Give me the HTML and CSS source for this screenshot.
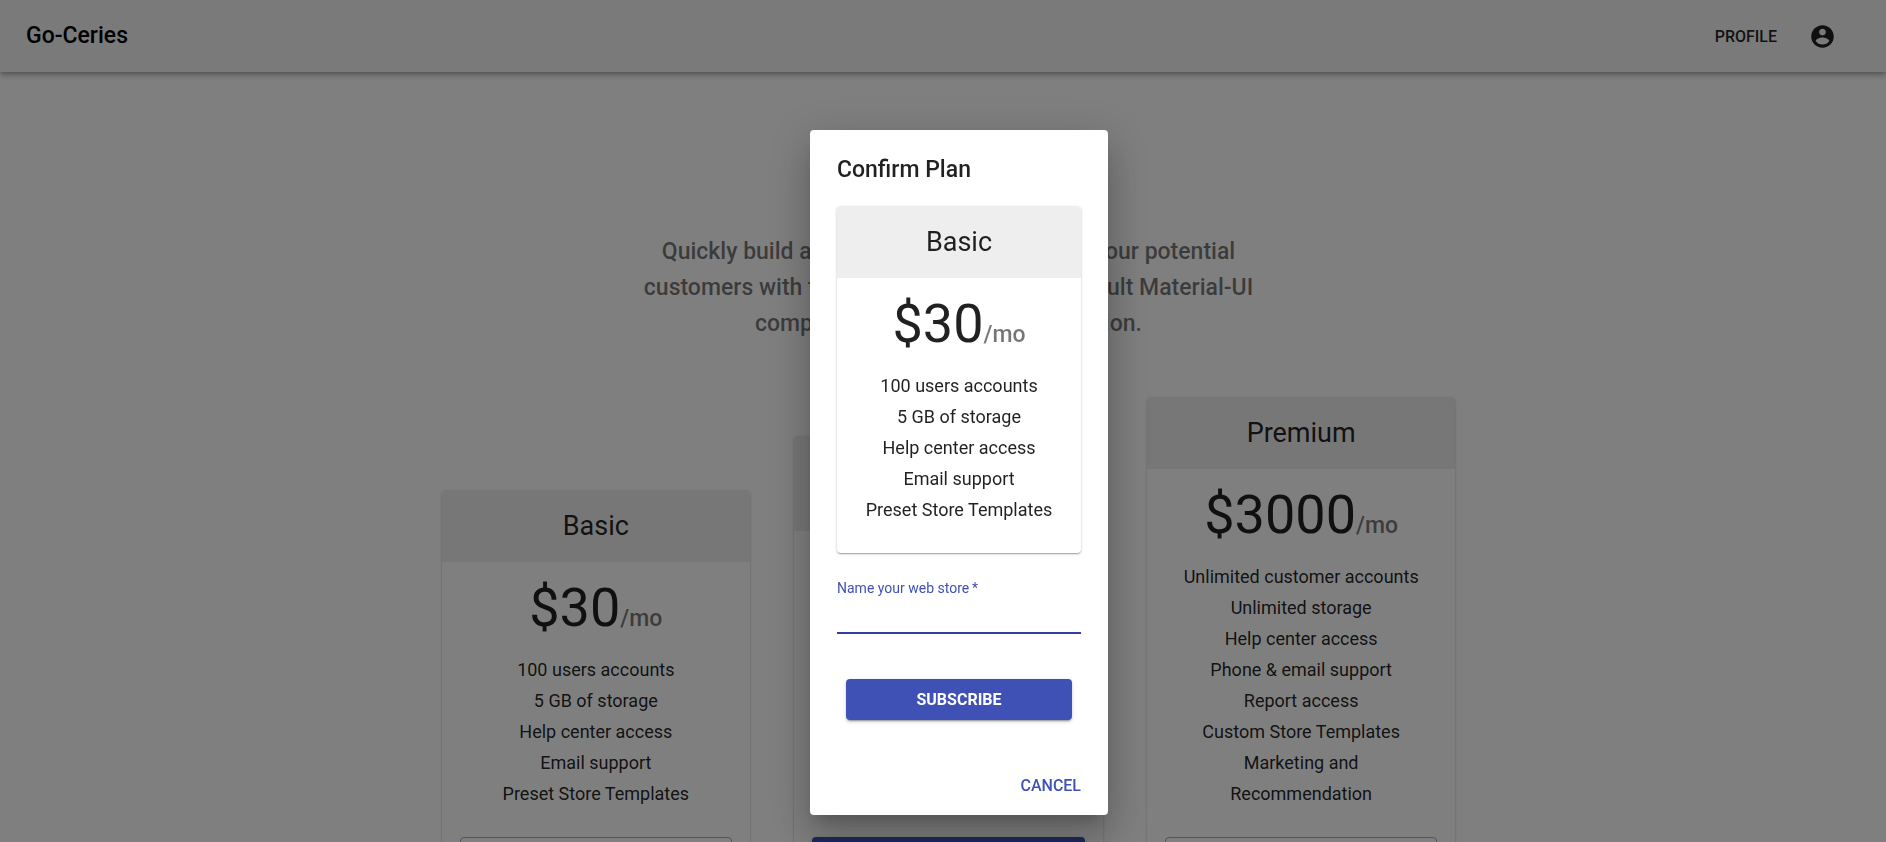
FILE: index.html
```html
<!DOCTYPE html>
<html lang="en">
<head>
<meta charset="utf-8">
<title>Go-Ceries</title>
<link rel="stylesheet" href="styles.css">
</head>
<body>
<header class="app-bar">
  <h1 class="brand">Go-Ceries</h1>
  <nav class="app-nav">
    <a class="nav-link" href="#profile">Profile</a>
    <button class="icon-button" type="button" aria-label="Account">
      <svg viewBox="0 0 24 24" aria-hidden="true"><path d="M12 2C6.48 2 2 6.48 2 12s4.480 10 10 10 10-4.480 10-10S17.520 2 12 2zm0 3c1.660 0 3 1.340 3 3s-1.340 3-3 3-3-1.340-3-3 1.340-3 3-3zm0 14.200c-2.500 0-4.710-1.280-6-3.220.030-1.990 4-3.080 6-3.080 1.990 0 5.970 1.090 6 3.080-1.290 1.940-3.500 3.220-6 3.220z"/></svg>
    </button>
  </nav>
</header>

<main class="pricing">
  <p class="intro">Quickly build an effective pricing table for your potential customers with this layout. It's built with default Material-UI components with little customization.</p>
  <div class="plans">
    <section class="card">
      <h2 class="card-header">Basic</h2>
      <div class="card-body">
        <p class="price">$30<span class="period">/mo</span></p>
        <ul class="features">
          <li>100 users accounts</li>
          <li>5 GB of storage</li>
          <li>Help center access</li>
          <li>Email support</li>
          <li>Preset Store Templates</li>
        </ul>
      </div>
      <div class="card-actions"><button class="button outlined" type="button" aria-label="Choose Basic"></button></div>
    </section>
    <section class="card">
      <h2 class="card-header">Pro<small class="card-note">Most popular</small></h2>
      <div class="card-body">
        <p class="price">$300<span class="period">/mo</span></p>
        <ul class="features">
          <li>1000 users</li>
          <li>10 GB of storage</li>
          <li>Help center</li>
          <li>Email support</li>
          <li>Reports</li>
          <li>Templates</li>
        </ul>
      </div>
      <div class="card-actions"><button class="button contained" type="button" aria-label="Choose Pro"></button></div>
    </section>
    <section class="card">
      <h2 class="card-header">Premium</h2>
      <div class="card-body">
        <p class="price">$3000<span class="period">/mo</span></p>
        <ul class="features">
          <li>Unlimited customer accounts</li>
          <li>Unlimited storage</li>
          <li>Help center access</li>
          <li>Phone &amp; email support</li>
          <li>Report access</li>
          <li>Custom Store Templates</li>
          <li>Marketing and</li>
          <li>Recommendation</li>
        </ul>
      </div>
      <div class="card-actions"><button class="button outlined" type="button" aria-label="Choose Premium"></button></div>
    </section>
  </div>
</main>

<div class="backdrop">
  <form class="dialog" role="dialog" aria-labelledby="dialog-title">
    <h2 class="dialog-title" id="dialog-title">Confirm Plan</h2>
    <div class="dialog-content">
      <section class="card">
        <h3 class="card-header">Basic</h3>
        <div class="card-body card-body-last">
          <p class="price">$30<span class="period">/mo</span></p>
          <ul class="features">
            <li>100 users accounts</li>
            <li>5 GB of storage</li>
            <li>Help center access</li>
            <li>Email support</li>
            <li>Preset Store Templates</li>
          </ul>
        </div>
      </section>
      <div class="field">
        <label class="field-label" for="store">Name your web store&thinsp;*</label>
        <input class="field-input" id="store" type="text" required>
      </div>
      <div class="submit"><button class="button contained" type="submit">Subscribe</button></div>
    </div>
    <div class="dialog-actions"><button class="button text" type="button">Cancel</button></div>
  </form>
</div>
</body>
</html>
```

FILE: styles.css
```css
* { box-sizing: border-box; }

body {
  margin: 0;
  height: 100vh;
  overflow: hidden;
  background: #fff;
  color: rgba(0, 0, 0, 0.87);
  font-family: Roboto, "Liberation Sans", sans-serif;
}

h1, h2, h3, p, ul { margin: 0; padding: 0; }

button, input { font-family: inherit; }

.app-bar {
  position: relative;
  display: flex;
  align-items: center;
  justify-content: space-between;
  height: 72px;
  padding: 0 50px 0 26px;
  background: #f5f5f5;
  box-shadow: 0 2px 4px -1px rgba(0, 0, 0, 0.2), 0 4px 5px rgba(0, 0, 0, 0.14), 0 1px 10px rgba(0, 0, 0, 0.12);
}

.brand {
  color: #000;
  font-size: 23px;
  font-weight: 500;
  line-height: 36px;
}

.app-nav {
  display: flex;
  align-items: center;
  gap: 32px;
}

.nav-link {
  color: inherit;
  font-size: 16px;
  font-weight: 500;
  text-decoration: none;
  text-transform: uppercase;
}

.icon-button {
  display: flex;
  padding: 0;
  border: 0;
  background: none;
  color: inherit;
}

.icon-button svg {
  width: 27px;
  height: 27px;
  fill: currentColor;
}

.pricing {
  padding: 162px 0 0 11px;
}

.intro {
  max-width: 638px;
  margin: 0 auto 55px;
  color: rgba(0, 0, 0, 0.54);
  font-size: 23px;
  font-weight: 500;
  line-height: 36px;
  text-align: center;
}

.plans {
  display: grid;
  grid-template-columns: repeat(3, 1fr);
  align-items: end;
  gap: 44px;
  max-width: 1014px;
  margin: 0 auto;
}

.card {
  overflow: hidden;
  border-radius: 4px;
  background: #fff;
  box-shadow: 0 1px 3px rgba(0, 0, 0, 0.2), 0 1px 1px rgba(0, 0, 0, 0.14), 0 2px 1px -1px rgba(0, 0, 0, 0.12);
  text-align: center;
}

.card-header {
  padding: 18px;
  background: #eee;
  font-size: 27px;
  font-weight: 400;
  line-height: 36px;
}

.card-note {
  display: block;
  font-size: 16px;
  line-height: 23px;
}

.card-body { padding: 18px; }

.card-body-last { padding-bottom: 28px; }

.price {
  margin-bottom: 18px;
  font-size: 54px;
  line-height: 56px;
}

.period {
  color: rgba(0, 0, 0, 0.54);
  font-size: 23px;
  font-weight: 500;
  line-height: 1;
}

.features {
  list-style: none;
  font-size: 18px;
  line-height: 31px;
}

.card-actions { padding: 10px 18px 18px; }

.button {
  display: block;
  height: 41px;
  border: 0;
  border-radius: 4px;
  background: none;
  color: #3f51b5;
  font-size: 16px;
  font-weight: 500;
  text-transform: uppercase;
}

.outlined {
  width: 100%;
  border: 1px solid rgba(63, 81, 181, 0.5);
}

.contained {
  width: 100%;
  background: #3f51b5;
  color: #fff;
  font-weight: 700;
  box-shadow: 0 3px 1px -2px rgba(0, 0, 0, 0.2), 0 2px 2px rgba(0, 0, 0, 0.14), 0 1px 5px rgba(0, 0, 0, 0.12);
}

.backdrop {
  position: fixed;
  inset: 0;
  display: flex;
  align-items: center;
  justify-content: center;
  padding: 102px 0 0 32px;
  background: rgba(0, 0, 0, 0.5);
}

.dialog {
  width: 298px;
  border-radius: 4px;
  background: #fff;
  box-shadow: 0 11px 15px -7px rgba(0, 0, 0, 0.2), 0 24px 38px 3px rgba(0, 0, 0, 0.14), 0 9px 46px 8px rgba(0, 0, 0, 0.12);
}

.dialog-title {
  padding: 22px 27px 18px;
  font-size: 23px;
  font-weight: 500;
  line-height: 36px;
}

.dialog-content { padding: 0 27px; }

.field {
  display: flex;
  flex-direction: column;
  margin-top: 27px;
}

.field-label {
  color: #3f51b5;
  font-size: 14px;
  line-height: 16px;
}

.field-input {
  width: 100%;
  height: 38px;
  padding: 0;
  border: 0;
  border-bottom: 2px solid #303f9f;
  outline: 0;
  background: transparent;
  font-size: 18px;
}

.submit { padding: 45px 9px; }

.dialog-actions {
  display: flex;
  justify-content: flex-end;
  padding: 0 27px 9px;
}

.text { padding: 0; }
```
